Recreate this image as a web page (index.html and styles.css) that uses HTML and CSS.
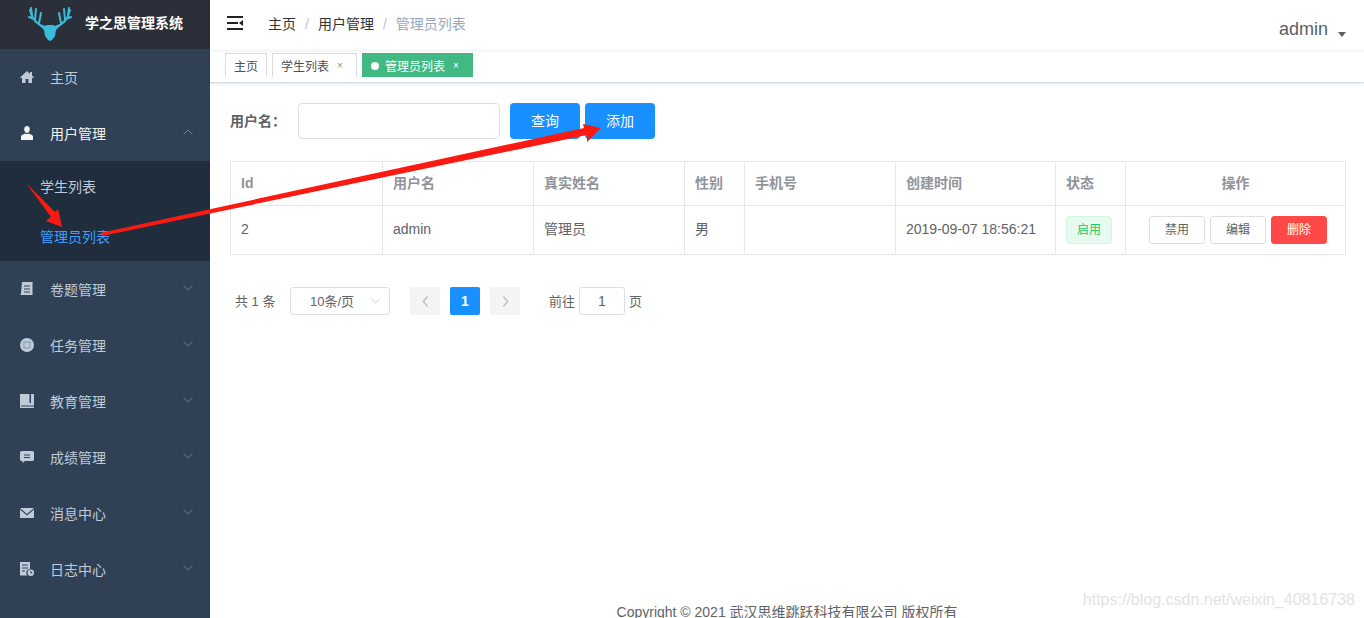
FILE: index.html
```html
<!DOCTYPE html>
<html lang="zh-CN">
<head>
    <meta charset="UTF-8">
    <meta name="viewport" content="width=device-width, initial-scale=1.0">
    <title>管理员列表</title>
    <link rel="stylesheet" href="styles.css">
</head>
<body>
    <div class="app">
        <aside class="sidebar">
            <div class="logo">
                <svg class="logo-deer" viewBox="0 0 44 34" width="44" height="34">
                    <g fill="none" stroke="#38bcd8" stroke-width="2" stroke-linecap="round">
                        <path d="M17 20C10 18 4 13 2 3M6 12L1 10M7 13L8 2M11 16L13 6M4 8L3 1"/>
                        <path d="M27 20C34 18 40 13 42 3M38 12L43 10M37 13L36 2M33 16L31 6M40 8L41 1"/>
                    </g>
                    <path d="M11 18L17 19 19 18 25 18 27 19 33 18 28 23 27 29 24 33 22 34 20 33 17 29 16 23z" fill="#38bcd8"/>
                </svg>
                <span class="logo-text">学之思管理系统</span>
            </div>
            <ul class="menu">
                <li class="menu-item">
                    <svg class="menu-icon" viewBox="0 0 14 14"><path d="M7 1L0 7.400l.8.900L2 7.400V13h3.600V9h2.800v4H12V7.400l1.200.9.800-.9-2-1.900V2h-2v2z" fill="#bfcbd9"/></svg>
                    <span>主页</span>
                </li>
                <li class="menu-item is-open">
                    <svg class="menu-icon" viewBox="0 0 14 14"><path d="M7 0c1.800 0 2.800 1.400 2.800 3.200S8.800 7 7 7 4.200 5 4.200 3.200 5.200 0 7 0zM1 14v-3.500C1 9 3.500 8.500 5 7.500c1 .8 3 .8 4 0 1.500 1 4 1.500 4 3V14z" fill="#f4f4f5"/></svg>
                    <span>用户管理</span>
                    <svg class="menu-arrow" viewBox="0 0 10 6"><path d="M.5 5.500L5 1l4.500 4.500" fill="none" stroke="#6f7b8a"/></svg>
                </li>
                <ul class="submenu">
                    <li class="submenu-item">学生列表</li>
                    <li class="submenu-item is-active">管理员列表</li>
                </ul>
                <li class="menu-item">
                    <svg class="menu-icon" viewBox="0 0 14 14"><path d="M2 0h11l-.5 1v12H0l1-1.200zm2 3.500v1h6v-1zm0 3v1h6v-1zm0 3v1h6v-1z" fill="#bfcbd9" fill-rule="evenodd"/></svg>
                    <span>卷题管理</span>
                    <svg class="menu-arrow" viewBox="0 0 10 6"><path d="M.5.500L5 5l4.500-4.500" fill="none" stroke="#6f7b8a"/></svg>
                </li>
                <li class="menu-item">
                    <svg class="menu-icon" viewBox="0 0 14 14"><circle cx="7" cy="7" r="7" fill="#bfcbd9"/><rect x="4" y="4" width="6" height="6" fill="none" stroke="#8494a6"/></svg>
                    <span>任务管理</span>
                    <svg class="menu-arrow" viewBox="0 0 10 6"><path d="M.5.500L5 5l4.500-4.500" fill="none" stroke="#6f7b8a"/></svg>
                </li>
                <li class="menu-item">
                    <svg class="menu-icon" viewBox="0 0 14 14"><path d="M0 0h14v14H0zM9.500 0v9H11V0zM1 11.500v1h13v-1z" fill="#bfcbd9" fill-rule="evenodd"/></svg>
                    <span>教育管理</span>
                    <svg class="menu-arrow" viewBox="0 0 10 6"><path d="M.5.500L5 5l4.500-4.500" fill="none" stroke="#6f7b8a"/></svg>
                </li>
                <li class="menu-item">
                    <svg class="menu-icon" viewBox="0 0 14 14"><path d="M1.500 1h11q1.500 0 1.500 1.500v7q0 1.500-1.500 1.500H5l-2.500 2v-2h-1Q0 11 0 9.500v-7Q0 1 1.500 1zM4 4.500v1h6v-1zm0 2.500v1h6V7z" fill="#bfcbd9" fill-rule="evenodd"/></svg>
                    <span>成绩管理</span>
                    <svg class="menu-arrow" viewBox="0 0 10 6"><path d="M.5.500L5 5l4.500-4.500" fill="none" stroke="#6f7b8a"/></svg>
                </li>
                <li class="menu-item">
                    <svg class="menu-icon" viewBox="0 0 14 14"><path d="M0 2h14L7 8zM0 3.500L7 9.500l7-6V12H0z" fill="#bfcbd9"/></svg>
                    <span>消息中心</span>
                    <svg class="menu-arrow" viewBox="0 0 10 6"><path d="M.5.500L5 5l4.500-4.500" fill="none" stroke="#6f7b8a"/></svg>
                </li>
                <li class="menu-item">
                    <svg class="menu-icon" viewBox="0 0 14 14"><path d="M0 0h10v7a4 4 0 0 0-3 6.500H0zm2 2.500v1h6v-1zm0 3v1h6v-1zm0 3v1h3v-1z" fill="#bfcbd9" fill-rule="evenodd"/><circle cx="10.800" cy="10.800" r="3.200" fill="#bfcbd9"/><path d="M10.800 9v2h1.500" fill="none" stroke="#304156"/></svg>
                    <span>日志中心</span>
                    <svg class="menu-arrow" viewBox="0 0 10 6"><path d="M.5.500L5 5l4.500-4.500" fill="none" stroke="#6f7b8a"/></svg>
                </li>
            </ul>
        </aside>

        <div class="main">
            <header class="navbar">
                <svg class="hamburger" viewBox="0 0 16 14"><path d="M0 0h16v2H0zM0 6h11v2H0zM0 12h16v2H0zM16 4v6l-4-3z" fill="#222"/></svg>
                <div class="breadcrumb">
                    <span>主页</span><i>/</i><span>用户管理</span><i>/</i><span class="current">管理员列表</span>
                </div>
                <div class="user">admin<b class="caret"></b></div>
            </header>
            <nav class="tags">
                <span class="tag">主页</span>
                <span class="tag">学生列表<em>×</em></span>
                <span class="tag is-active"><u></u>管理员列表<em>×</em></span>
            </nav>

            <section class="content">
                <form class="search">
                    <label>用户名：</label>
                    <input type="text" class="input">
                    <button type="button" class="btn btn-primary">查询</button>
                    <button type="button" class="btn btn-primary">添加</button>
                </form>

                <table class="table">
                    <colgroup>
                        <col class="c-id"><col class="c-name"><col class="c-real"><col class="c-sex"><col class="c-phone"><col class="c-time"><col class="c-state"><col>
                    </colgroup>
                    <thead>
                        <tr><th>Id</th><th class="zh">用户名</th><th class="zh">真实姓名</th><th class="zh">性别</th><th class="zh">手机号</th><th class="zh">创建时间</th><th class="zh">状态</th><th class="zh center">操作</th></tr>
                    </thead>
                    <tbody>
                        <tr>
                            <td>2</td><td>admin</td><td class="zh">管理员</td><td class="zh">男</td><td></td><td>2019-09-07 18:56:21</td>
                            <td class="ctl"><span class="badge">启用</span></td>
                            <td class="ctl">
                                <div class="ops">
                                    <button type="button" class="mini">禁用</button>
                                    <button type="button" class="mini">编辑</button>
                                    <button type="button" class="mini mini-danger">删除</button>
                                </div>
                            </td>
                        </tr>
                    </tbody>
                </table>

                <div class="pager">
                    <span class="total">共 1 条</span>
                    <div class="size"><span>10条/页</span>
                        <svg viewBox="0 0 10 6" width="9" height="6"><path d="M.5.500L5 5l4.500-4.500" fill="none" stroke="#c0c4cc"/></svg>
                    </div>
                    <span class="page-btn"><svg viewBox="0 0 6 10" width="7" height="11"><path d="M5 .5L1 5l4 4.500" fill="none" stroke="#c0c4cc" stroke-width="1.500"/></svg></span>
                    <span class="page-btn is-current">1</span>
                    <span class="page-btn"><svg viewBox="0 0 6 10" width="7" height="11"><path d="M1 .5L5 5 1 9.500" fill="none" stroke="#c0c4cc" stroke-width="1.500"/></svg></span>
                    <span class="goto">前往</span>
                    <span class="goto-box">1</span>
                    <span class="goto-end">页</span>
                </div>
            </section>

            <footer class="footer">Copyright © 2021 武汉思维跳跃科技有限公司 版权所有</footer>
        </div>
    </div>

    <!-- red marks drawn over the screenshot -->
    <svg class="marks" viewBox="0 0 1364 618" width="1364" height="618">
        <path d="M26 183L55 212 58 209 62 227 46 221 51 217z" fill="#fb1a12"/>
        <path d="M100 233L584 128 583 124 601 128 587 142 587 135 102 236z" fill="#fb1a12"/>
    </svg>
    <div class="watermark">https://blog.csdn.net/weixin_40816738</div>
</body>
</html>
```

FILE: styles.css
```css
* {
    margin: 0;
    padding: 0;
    box-sizing: border-box;
}

body {
    font-family: "Liberation Sans", "Noto Sans CJK SC", sans-serif;
    font-size: 14px;
    color: #606266;
    background: #fff;
    height: 100vh;
    overflow: hidden;
}

.app {
    display: flex;
    height: 618px;
    overflow: hidden;
}

/* sidebar */
.sidebar {
    flex: 0 0 210px;
    background: #304156;
    color: #bfcbd9;
}

.logo {
    display: flex;
    align-items: center;
    height: 49px;
    padding: 0 0 1px 28px;
    background: #2b2f3a;
}

.logo-text {
    margin-left: 13px;
    margin-bottom: 4px;
    font-size: 14px;
    font-weight: bold;
    color: #fff;
}

.menu {
    list-style: none;
}

.menu-item {
    display: flex;
    align-items: center;
    height: 56px;
    padding-left: 20px;
    position: relative;
}

.menu-item.is-open {
    color: #f4f4f5;
    padding-bottom: 1px;
}

.menu-icon {
    width: 14px;
    height: 14px;
    margin-right: 16px;
    flex: none;
}

.menu-arrow {
    position: absolute;
    right: 17px;
    top: 24px;
    width: 10px;
    height: 6px;
}

.submenu {
    list-style: none;
    background: #1f2d3d;
    height: 100px;
}

.submenu-item {
    height: 50px;
    line-height: 50px;
    padding-left: 40px;
    padding-top: 1px;
}

.submenu-item.is-active {
    color: #409eff;
}

/* header */
.main {
    flex: 1;
    min-width: 0;
    display: flex;
    flex-direction: column;
    align-items: stretch;
}

.navbar {
    flex: none;
    display: flex;
    align-items: center;
    height: 50px;
    padding: 0 0 4px 17px;
    box-shadow: 0 1px 3px rgba(0, 21, 41, 0.08);
    position: relative;
}

.hamburger {
    width: 16px;
    height: 14px;
}

.breadcrumb {
    margin-left: 25px;
    color: #303133;
}

.breadcrumb i {
    font-style: normal;
    color: #c0c4cc;
    margin: 0 9px;
}

.breadcrumb .current {
    color: #97a8be;
}

.user {
    margin-left: auto;
    margin-right: 18px;
    margin-top: 12px;
    font-size: 18px;
    color: #5a5e66;
}

.caret {
    display: inline-block;
    margin-left: 10px;
    vertical-align: -2px;
    border: 4px solid transparent;
    border-top: 5px solid #5a5e66;
    border-bottom: 0;
}

.tags {
    flex: none;
    display: flex;
    align-items: flex-start;
    height: 33px;
    padding: 3px 0 0 15px;
    border-bottom: 1px solid #d8dce5;
    box-shadow: 0 1px 3px rgba(0, 0, 0, 0.12);
}

.tag {
    display: flex;
    align-items: center;
    height: 24px;
    padding: 0 8px;
    margin-right: 5px;
    font-size: 12px;
    color: #495060;
    border: 1px solid #d8dce5;
    border-bottom: 0;
}

.tag em {
    font-style: normal;
    font-size: 10px;
    color: #8a8f99;
    margin-left: 8px;
    margin-right: 5px;
}

.tag.is-active {
    background: #42b983;
    border-color: #42b983;
    color: #fff;
}

.tag.is-active em {
    color: #fff;
}

.tag u {
    width: 8px;
    height: 8px;
    border-radius: 50%;
    background: #fff;
    margin-right: 6px;
}

/* list page */
.content {
    flex: none;
    height: 522px;
    padding: 20px 18px 0 20px;
}

.search {
    display: flex;
    align-items: center;
    height: 36px;
}

.search label {
    width: 68px;
    font-weight: bold;
    padding-bottom: 2px;
}

.input {
    width: 202px;
    height: 36px;
    border: 1px solid #dcdfe6;
    border-radius: 4px;
    margin-right: 10px;
}

.btn {
    width: 70px;
    height: 36px;
    margin-right: 5px;
    padding-bottom: 2px;
    border: 0;
    border-radius: 4px;
    font: inherit;
}

.btn-primary {
    background: #1890ff;
    color: #fff;
}

.table {
    width: 1116px;
    margin-top: 22px;
    table-layout: fixed;
    border-collapse: collapse;
    border: 1px solid #e4e7ed;
}

.c-id {
    width: 152px;
}

.c-name, .c-real, .c-phone {
    width: 151px;
}

.c-sex {
    width: 60px;
}

.c-time {
    width: 160px;
}

.c-state {
    width: 70px;
}

.table th, .table td {
    border: 1px solid #e4e7ed;
    padding: 0 10px 2px;
    text-align: left;
}

.table th {
    height: 44px;
    color: #909399;
}

.table td {
    height: 49px;
}

.table .zh {
    padding-bottom: 4px;
}

.table td.ctl {
    padding-bottom: 0;
}

.table .center {
    text-align: center;
}

.badge {
    display: block;
    width: 46px;
    height: 28px;
    line-height: 26px;
    text-align: center;
    font-size: 12px;
    color: #13ce66;
    background: #e7faf0;
    border: 1px solid #d0f5e0;
    border-radius: 4px;
}

.ops {
    display: flex;
    justify-content: center;
    gap: 5px;
    padding-left: 5px;
}

.mini {
    width: 56px;
    height: 28px;
    padding-bottom: 4px;
    font: inherit;
    font-size: 12px;
    color: #606266;
    background: #fff;
    border: 1px solid #dcdfe6;
    border-radius: 3px;
}

.mini-danger {
    background: #ff4949;
    border-color: #ff4949;
    color: #fff;
}

.pager {
    display: flex;
    align-items: center;
    height: 28px;
    margin-top: 32px;
    font-size: 13px;
}

.total {
    margin-left: 5px;
    width: 55px;
    padding-bottom: 2px;
}

.size {
    display: flex;
    align-items: center;
    justify-content: space-between;
    width: 100px;
    height: 28px;
    padding: 0 9px 0 19px;
    border: 1px solid #dcdfe6;
    border-radius: 3px;
    margin-right: 20px;
}

.size span {
    padding-bottom: 2px;
}

.page-btn {
    display: flex;
    align-items: center;
    justify-content: center;
    width: 30px;
    height: 28px;
    margin-right: 10px;
    background: #f4f4f5;
    border-radius: 2px;
}

.page-btn.is-current {
    background: #1890ff;
    color: #fff;
    font-size: 14px;
    font-weight: bold;
    padding-bottom: 1px;
}

.goto {
    margin-left: 19px;
    margin-right: 4px;
    padding-bottom: 2px;
}

.goto-box {
    width: 46px;
    height: 28px;
    line-height: 27px;
    text-align: center;
    font-size: 14px;
    border: 1px solid #dcdfe6;
    border-radius: 3px;
}

.goto-end {
    margin-left: 4px;
    padding-bottom: 2px;
}

.footer {
    flex: none;
    text-align: center;
    line-height: 14px;
    color: #606266;
    white-space: nowrap;
}

/* overlays */
.marks {
    position: absolute;
    left: 0;
    top: 0;
    pointer-events: none;
}

.watermark {
    position: absolute;
    right: 9px;
    top: 591px;
    font-size: 16px;
    color: #e3e3e3;
}
```
